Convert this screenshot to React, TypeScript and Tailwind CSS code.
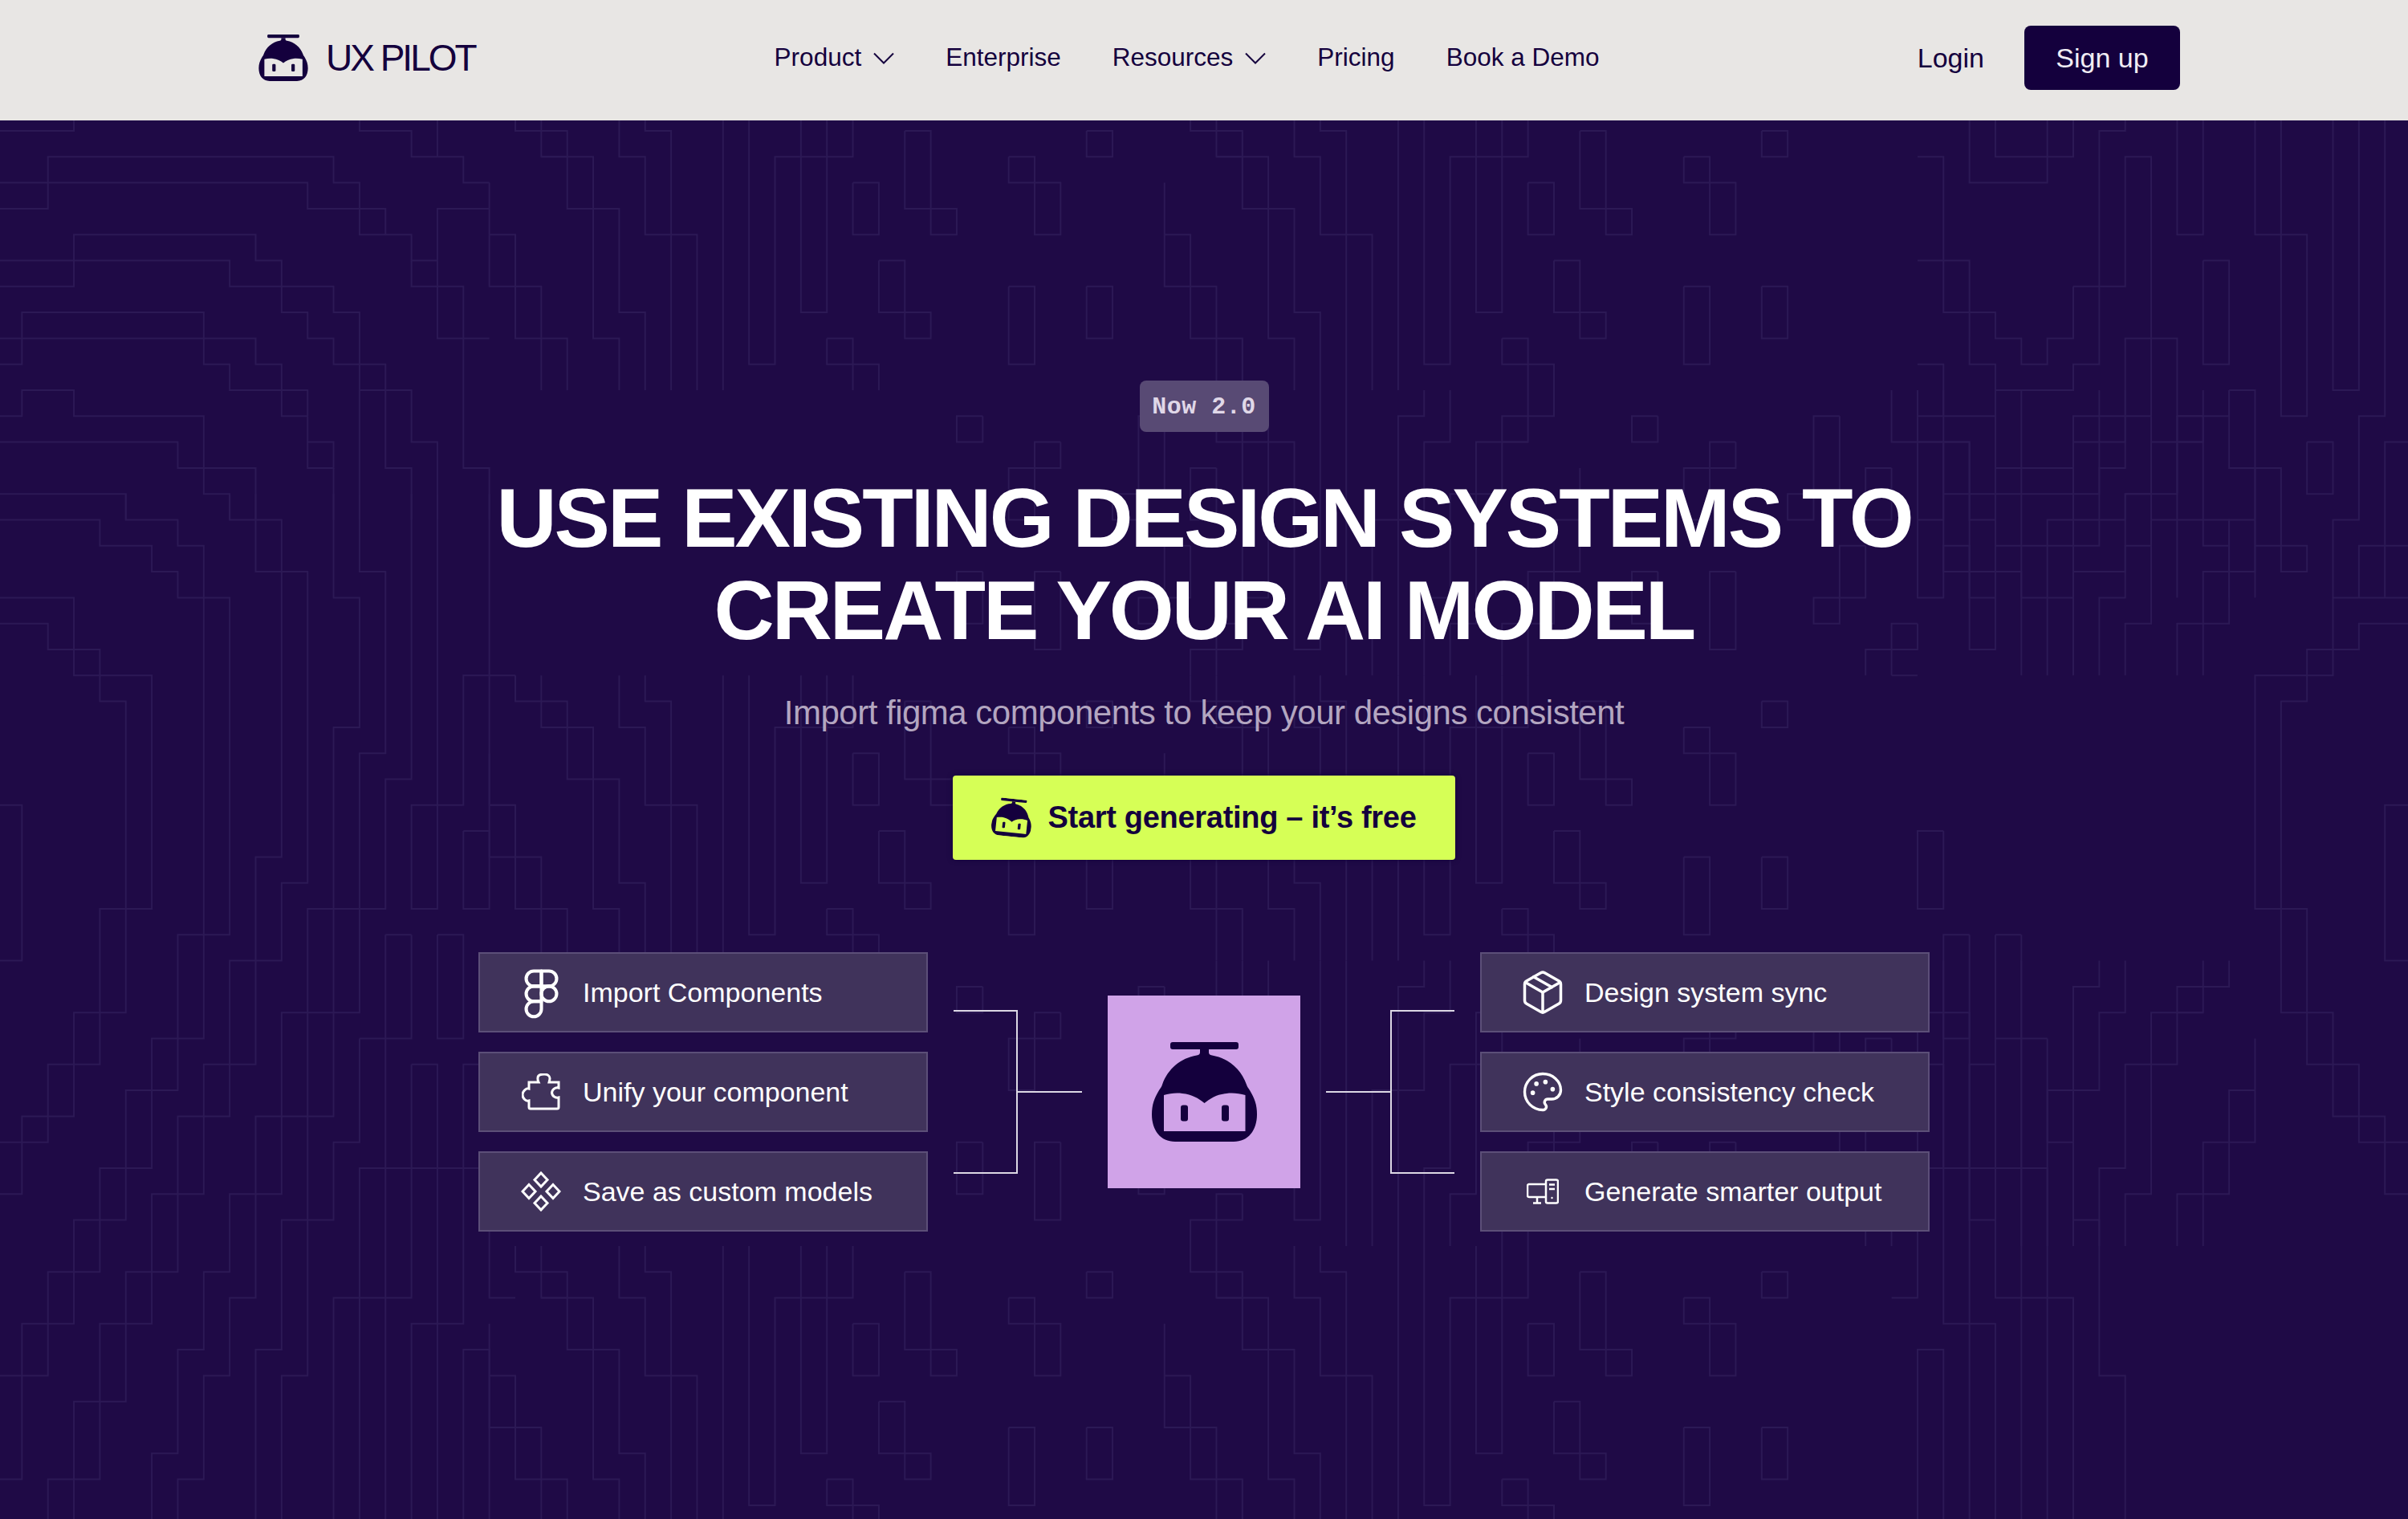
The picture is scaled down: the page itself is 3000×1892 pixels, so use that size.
import type { ReactNode } from "react"
import { Figma, Package, Palette } from "lucide-react"

type Pt = [number, number]

// faint circuit lines, traced on a 32px grid: left edge of the hero, top to bottom
const leftBlock: Pt[][] = [
  [[0, 0], [3, 0], [3, -1]],
  [[0, 3], [2, 3], [2, 1], [13, 1], [13, 2], [14, 2], [14, 4], [15, 4], [15, 3], [12, 3], [12, 2], [0, 2]],
  [[15, 4], [16, 4], [16, 5], [17, 5], [17, 6], [18, 6], [18, 8], [17, 8], [17, 3], [19, 3]],
  [[14, -1], [14, 0], [16, 0], [16, 1], [18, 1], [18, 2], [19, 2]],
  [[17, -1], [17, 1]],
  [[16, 5], [16, 6], [17, 6]],
  [[0, 6], [3, 6], [3, 4], [10, 4], [10, 5], [11, 5], [11, 7], [12, 7], [12, 8], [13, 8], [13, 9], [14, 9], [14, 10], [15, 10], [15, 9], [14, 9], [14, 7], [13, 7], [13, 6], [9, 6], [9, 5], [0, 5]],
  [[0, 9], [1, 9], [1, 7], [8, 7], [8, 8], [10, 8], [10, 9], [11, 9], [11, 11], [12, 11], [12, 12], [13, 12], [13, 13], [12, 13], [12, 11]],
  [[0, 8], [8, 8], [8, 9], [9, 9], [9, 10], [12, 10], [12, 11]],
  [[0, 11], [1, 11], [1, 10], [3, 10], [3, 11], [8, 11], [8, 14], [9, 14], [9, 15]],
  [[0, 12], [7, 12], [7, 13], [10, 13], [10, 15]],
  [[0, 14], [5, 14], [5, 15]],
  [[13, 13], [13, 15]],
  [[14, 10], [14, 15]],
  [[15, 10], [16, 10], [16, 12], [17, 12], [17, 15]],
  [[15, 10], [15, 13], [16, 13], [16, 15]],
  [[18, 8], [18, 13], [19, 13], [19, 15]],
  [[18, 8], [19, 8]],
  [[0, 15], [4, 15], [4, 16], [6, 16], [6, 17], [7, 17], [7, 18], [9, 18], [9, 31], [7, 31], [7, 35], [6, 35], [6, 37], [5, 37], [5, 40], [4, 40], [4, 42], [3, 42], [3, 44], [2, 44], [2, 46], [1, 46], [1, 48], [0, 48]],
  [[5, 14], [5, 15], [7, 15], [7, 16], [8, 16], [8, 35], [7, 35], [7, 37], [6, 37], [6, 40], [5, 40], [5, 42], [4, 42], [4, 44], [3, 44], [3, 46], [2, 46], [2, 48], [1, 48], [1, 52], [0, 52]],
  [[9, 14], [9, 15], [11, 15], [11, 28], [10, 28], [10, 36], [9, 36], [9, 38], [8, 38], [8, 41], [7, 41], [7, 44], [6, 44], [6, 46], [5, 46], [5, 49], [4, 49], [4, 52], [3, 52], [3, 55]],
  [[10, 14], [10, 17], [12, 17], [12, 29], [11, 29], [11, 32], [9, 32], [9, 36], [8, 36], [8, 38], [7, 38], [7, 41], [6, 41], [6, 44], [5, 44], [5, 46], [4, 46], [4, 49], [3, 49], [3, 52], [2, 52], [2, 55]],
  [[13, 14], [13, 18], [14, 18], [14, 23], [13, 23], [13, 34], [13, 38], [12, 38], [12, 42], [11, 42], [11, 47], [10, 47], [10, 55]],
  [[14, 14], [14, 17], [15, 17], [15, 24], [14, 24], [14, 34], [11, 34], [11, 38], [10, 38], [10, 41], [9, 41], [9, 44], [8, 44], [8, 47], [7, 47], [7, 51], [6, 51], [6, 55]],
  [[16, 14], [16, 25], [15, 25], [15, 30], [12, 30], [12, 38], [11, 38], [11, 41], [10, 41], [10, 45], [9, 45], [9, 48], [8, 48], [8, 52], [7, 52], [7, 55]],
  [[17, 14], [17, 30], [16, 30], [16, 26], [18, 26], [18, 21], [19, 21]],
  [[19, 14], [19, 26], [20, 26]],
  [[19, 21], [20, 21]],
  [[18, 27], [19, 27], [19, 30], [18, 30], [18, 27]],
  [[0, 18], [3, 18], [3, 20], [2, 20], [2, 19], [0, 19]],
  [[2, 20], [4, 20], [4, 21], [3, 21], [3, 20]],
  [[4, 21], [6, 21], [6, 30], [4, 30], [4, 36], [3, 36], [3, 38], [2, 38], [2, 39], [1, 39], [1, 41], [0, 41]],
  [[4, 21], [4, 22], [5, 22], [5, 34], [3, 34], [3, 36], [2, 36], [2, 38], [1, 38], [1, 39], [0, 39]],
  [[0, 26], [1, 26], [1, 32], [0, 32]],
  [[14, 35], [14, 39], [13, 39], [13, 42], [12, 42], [12, 48], [11, 48], [11, 55]],
  [[16, 31], [16, 35], [14, 35]],
  [[15, 31], [16, 31]],
  [[15, 31], [15, 40], [14, 40], [14, 45], [13, 45], [13, 55]],
  [[17, 31], [17, 35], [18, 35], [18, 31], [17, 31]],
  [[16, 36], [16, 40], [15, 40], [15, 45], [14, 45], [14, 55]],
  [[16, 36], [17, 36], [17, 40], [16, 40], [16, 45], [15, 45], [15, 55]],
  [[19, 36], [18, 36], [18, 40], [17, 40], [17, 46], [16, 46], [16, 55]],
  [[19, 40], [18, 40], [18, 46], [17, 46], [17, 55]],
  [[18, 55], [18, 47], [19, 47], [19, 55]],
  [[19, 42], [19, 45], [20, 45]],
]

// top band between the two edges, repeated down the middle of the page
const middleTile: Pt[][] = [
  [[20, -1], [20, 0], [22, 0], [22, 1], [21, 1], [21, -1]],
  [[21, 1], [23, 1], [23, 8], [24, 8], [24, 10]],
  [[22, 1], [22, 3], [24, 3], [24, 7], [25, 7], [25, 10]],
  [[24, -1], [24, 1], [25, 1], [25, 4], [26, 4], [26, 10]],
  [[25, -1], [25, 0], [26, 0], [26, 4], [27, 4], [27, 10]],
  [[19, 2], [19, 6], [21, 6], [21, 8], [22, 8], [22, 10]],
  [[19, 4], [20, 4], [20, 8], [21, 8], [21, 10]],
  [[28, -1], [28, 10]],
  [[29, -1], [29, 9], [30, 9], [30, 1], [33, 1], [33, -1]],
  [[31, -1], [31, 7], [32, 7], [32, -1]],
  [[33, 2], [34, 2], [34, 4], [33, 4], [33, 2]],
  [[35, 0], [36, 0], [36, 3], [37, 3], [37, 4], [36, 4], [36, 3], [35, 3], [35, 0]],
  [[34, 5], [35, 5], [35, 7], [36, 7], [36, 8], [35, 8], [35, 7], [34, 7], [34, 5]],
  [[32, 8], [33, 8], [33, 9], [34, 9], [34, 10]],
  [[32, 8], [32, 9], [33, 9], [33, 10]],
  [[42, 0], [43, 0], [43, 1], [42, 1], [42, 0]],
  [[39, 1], [40, 1], [40, 2], [41, 2], [41, 4], [40, 4], [40, 2], [39, 2], [39, 1]],
  [[39, 6], [40, 6], [40, 9], [39, 9], [39, 6]],
  [[42, 6], [43, 6], [43, 8], [42, 8], [42, 6]],
]

const rightBlock: Pt[][] = [
  [[74, 1], [75, 1], [75, 5], [74, 5]],
  [[76, -1], [76, 2], [79, 2], [79, -1]],
  [[77, -1], [77, 1], [80, 1], [80, -1]],
  [[82, -1], [82, 0], [81, 0], [81, 6], [82, 6], [82, 1], [83, 1], [83, 8], [84, 8], [84, 11], [85, 11], [85, 16], [86, 16], [86, 15], [83, 15]],
  [[80, 6], [81, 6], [81, 9], [80, 9], [80, 10], [77, 10], [77, 9], [76, 9], [76, 7], [77, 7], [77, 8], [78, 8], [78, 9], [79, 9], [79, 8], [80, 8], [80, 6]],
  [[75, 5], [76, 5], [76, 7], [75, 7], [75, 5]],
  [[74, 9], [75, 9], [75, 11], [74, 11]],
  [[75, 11], [77, 11], [77, 13], [80, 13], [80, 12], [81, 12], [81, 11], [82, 11], [82, 8], [83, 8], [83, 11], [82, 11], [82, 13], [81, 13], [81, 14], [76, 14], [76, 12], [74, 12]],
  [[75, 12], [75, 15], [74, 15]],
  [[75, 14], [76, 14], [76, 15], [77, 15], [77, 16], [81, 16], [81, 15], [82, 15], [82, 14], [83, 14], [83, 11]],
  [[84, 11], [84, 18]],
  [[83, 15], [83, 16], [82, 16], [82, 17], [80, 17], [80, 18], [78, 18], [78, 17], [76, 17], [76, 16], [75, 16], [75, 17], [76, 17], [76, 18], [77, 18]],
  [[84, -1], [84, 4], [85, 4], [85, -1]],
  [[87, -1], [87, 4], [89, 4], [89, 11], [88, 11], [88, -1]],
  [[85, 5], [86, 5], [86, 9], [85, 9], [85, 5]],
  [[86, 10], [87, 10], [87, 13], [86, 13], [86, 10]],
  [[87, 13], [88, 13], [88, 17], [89, 17], [89, 16], [87, 16], [87, 13]],
  [[86, 16], [86, 18]],
  [[87, 16], [87, 18]],
  [[90, -1], [90, 10], [91, 10], [91, -1]],
  [[92, -1], [92, 11], [91, 11], [91, 15], [90, 15], [90, 18]],
  [[89, 12], [90, 12], [90, 14], [89, 14], [89, 12]],
  [[93, 12], [92, 12], [92, 16], [91, 16], [91, 18]],
  [[92, 16], [93, 16]],
  [[92, 16], [92, 18]],
]

function buildLines() {
  const out: Pt[][] = [...leftBlock, ...rightBlock, ...middleTile]
  // second half of the top band
  middleTile.forEach((l) => out.push(l.map(([c, r]) => [c + 26, r] as Pt)))
  // below the band the tile repeats, every other row flipped
  for (let row = 1; row <= 4; row++) {
    middleTile.forEach((l) => {
      out.push(l.map(([c, r]) => (row % 2 ? [93 - c - 13, r + row * 11] : [c, r + row * 11]) as Pt))
      out.push(l.map(([c, r]) => (row % 2 ? [93 - c + 13, r + row * 11] : [c + 26, r + row * 11]) as Pt))
    })
  }
  // right edge below the traced part mirrors the left edge
  leftBlock.forEach((l) => {
    if (l[0][1] >= 18) out.push(l.map(([c, r]) => [93 - c, r] as Pt))
  })
  return out
}

const gridX = (c: number) => c * 32.35 - 5
const gridY = (r: number) => 13 + r * 32.3

function CircuitLines() {
  return (
    <svg className="absolute inset-0 h-full w-full" aria-hidden="true">
      {buildLines().map((pts, i) => (
        <polyline
          key={i}
          points={pts.map(([c, r]) => `${gridX(c)},${gridY(r)}`).join(" ")}
          fill="none"
          stroke="#2c1955"
          strokeWidth="2"
        />
      ))}
    </svg>
  )
}

function PilotLogo({ className, face, ink = "#14003d" }: { className?: string; face: string; ink?: string }) {
  return (
    <svg viewBox="0 0 131 124" className={className} aria-hidden="true">
      <rect x="23" y="0" width="85" height="9" rx="3" fill={ink} />
      <path
        d="M60 9h11v4c0 1.500 1 3 4 3.500C95 20 111 33 118 53c1 3 2 4 4 7 6 10 9 18 9 30 0 20-11 34-29 34H29C11 124 0 110 0 90c0-12 3-20 9-30 2-3 3-4 4-7C20 33 36 20 56 16.500c3-.5 4-2 4-3.500z"
        fill={ink}
      />
      <path d="M15 66c7-2 15-3 23-2 12 1 20 6 27.500 12C73 70 81 65 93 64c8-1 16 0 23.500 2v45H15z" fill={face} />
      <rect x="36" y="78.500" width="9" height="20" rx="3" fill={ink} />
      <rect x="87" y="78.500" width="9" height="20" rx="3" fill={ink} />
    </svg>
  )
}

function NavLink({ label, menu }: { label: string; menu?: boolean }) {
  return (
    <a href="#" className="flex items-center gap-[15px] text-[31.500px] leading-none text-[#14003d]">
      {label}
      {menu && (
        <svg width="26" height="15" viewBox="0 0 26 15" fill="none" stroke="#14003d" strokeWidth="2" aria-hidden="true">
          <path d="M1 1.500l12 12 12-12" />
        </svg>
      )}
    </a>
  )
}

function PuzzleIcon() {
  return (
    <svg width="48" height="46" viewBox="0 0 48 46" fill="none" stroke="white" strokeWidth="3" aria-hidden="true">
      <path d="M9 19V11H21C19.500 8 20 6 20 5.500 20 2 24 1 28 1 32 1 35 3 35 6 35 8 34.500 9 34 11H46V18C43 17 38 19 37.500 24 38 29 43 31 46 30V42C46 43.500 45.500 44 44 44H11C10 44 9 43.500 9 42V34C6 35 1 32 1 26.500 1 22 6 18 9 19z" />
    </svg>
  )
}

function DiamondsIcon() {
  return (
    <svg width="50" height="50" viewBox="0 0 50 50" fill="none" stroke="white" strokeWidth="3" aria-hidden="true">
      <path d="M25 2l8 8.500-8 8.500-8-8.500z" />
      <path d="M10 16.500l8 8.500-8 8.500L2 25z" />
      <path d="M40 16.500l8 8.500-8 8.500-8-8.500z" />
      <path d="M25 31l8 8.500-8 8.500-8-8.500z" />
    </svg>
  )
}

function DesktopIcon() {
  return (
    <svg width="40" height="32" viewBox="0 0 40 32" fill="none" stroke="white" strokeWidth="2.500" aria-hidden="true">
      <path d="M24 7H3a2 2 0 0 0-2 2v12a2 2 0 0 0 2 2h21" />
      <path d="M13 23v7M8 30.500h10" />
      <rect x="24" y="1.500" width="15" height="29" rx="2" />
      <path d="M28 7.500h7M28 13h7" />
      <circle cx="31.500" cy="24" r="1.200" fill="white" stroke="none" />
    </svg>
  )
}

function Card({ icon, label }: { icon: ReactNode; label: string }) {
  return (
    <div className="flex h-[100px] w-[560px] items-center border-2 border-[#5c4f78] bg-[#40335b] pl-[24px]">
      <div className="flex w-[104px] shrink-0 justify-center">{icon}</div>
      <span className="text-[34px] leading-none text-white">{label}</span>
    </div>
  )
}

function Connector({ flip }: { flip?: boolean }) {
  return (
    <svg width="160" height="204" viewBox="0 0 160 204" fill="none" stroke="#dcd8e4" strokeWidth="2" className={flip ? "-scale-x-100" : ""} aria-hidden="true">
      <path d="M0 1H79V203H0M79 102H160" />
    </svg>
  )
}

export default function App() {
  return (
    <div className="flex h-[1892px] w-full flex-col bg-[#1f0a46] font-['Liberation_Sans',Arial,sans-serif]">
      <header className="flex h-[150px] shrink-0 items-center bg-[#e8e6e4] pb-[6px] pl-[321px] pr-[284px]">
        <a href="#" className="flex items-center gap-[21px]">
          <PilotLogo className="h-[58px] w-[64px]" face="#e8e6e4" />
          <span className="text-[46px] leading-none tracking-[-3px] text-[#14003d]">UX PILOT</span>
        </a>
        <nav className="ml-[373px] flex items-center gap-[64px]">
          <NavLink label="Product" menu />
          <NavLink label="Enterprise" />
          <NavLink label="Resources" menu />
          <NavLink label="Pricing" />
          <NavLink label="Book a Demo" />
        </nav>
        <div className="ml-auto flex items-center gap-[50px]">
          <a href="#" className="text-[34px] leading-none text-[#14003d]">Login</a>
          <button className="flex h-[80px] w-[194px] items-center justify-center rounded-[8px] bg-[#14003d] text-[34px] text-[#f1edf4]">
            Sign up
          </button>
        </div>
      </header>

      <main className="relative flex-1 overflow-hidden">
        <CircuitLines />
        <div className="relative flex flex-col items-center pt-[324px]">
          <span className="flex h-[64px] w-[161px] items-center justify-center rounded-[8px] bg-[#584a74] pt-[2px] font-['Liberation_Mono',monospace] text-[30px] font-bold tracking-[0.5px] text-[#e0d8e8]">
            Now 2.0
          </span>
          <h1 className="mt-[50px] text-center text-[104px] font-bold leading-[115px] tracking-[-3px] text-white">
            USE EXISTING DESIGN SYSTEMS TO
            <br />
            CREATE YOUR AI MODEL
          </h1>
          <p className="mt-[46px] text-[42px] leading-[48px] tracking-[-0.5px] text-[#b3a6c0]">
            Import figma components to keep your designs consistent
          </p>
          <a href="#" className="mt-[54px] flex h-[105px] w-[626px] items-center justify-center gap-[20px] rounded-[4px] bg-[#d6ff56] text-[38px] font-bold tracking-[-0.3px] text-[#14003d] shadow-[0_0_6px_#12003a]">
            <PilotLogo className="h-[47px] w-[50px] rotate-[6deg]" face="#d6ff56" />
            Start generating – it’s free
          </a>
          <div className="mt-[115px] flex items-center gap-[32px]">
            <div className="flex flex-col gap-[24px]">
              <Card icon={<Figma className="h-[65px] w-[65px] text-white" strokeWidth={1.500} />} label="Import Components" />
              <Card icon={<PuzzleIcon />} label="Unify your component" />
              <Card icon={<DiamondsIcon />} label="Save as custom models" />
            </div>
            <Connector />
            <div className="flex h-[240px] w-[240px] items-center justify-center bg-[#d0a3e8]">
              <PilotLogo className="h-[124px] w-[131px]" face="#d0a3e8" />
            </div>
            <Connector flip />
            <div className="flex flex-col gap-[24px]">
              <Card icon={<Package className="h-[60px] w-[60px] text-white" strokeWidth={1.400} />} label="Design system sync" />
              <Card icon={<Palette className="h-[54px] w-[54px] text-white" strokeWidth={1.500} />} label="Style consistency check" />
              <Card icon={<DesktopIcon />} label="Generate smarter output" />
            </div>
          </div>
        </div>
      </main>
    </div>
  )
}
